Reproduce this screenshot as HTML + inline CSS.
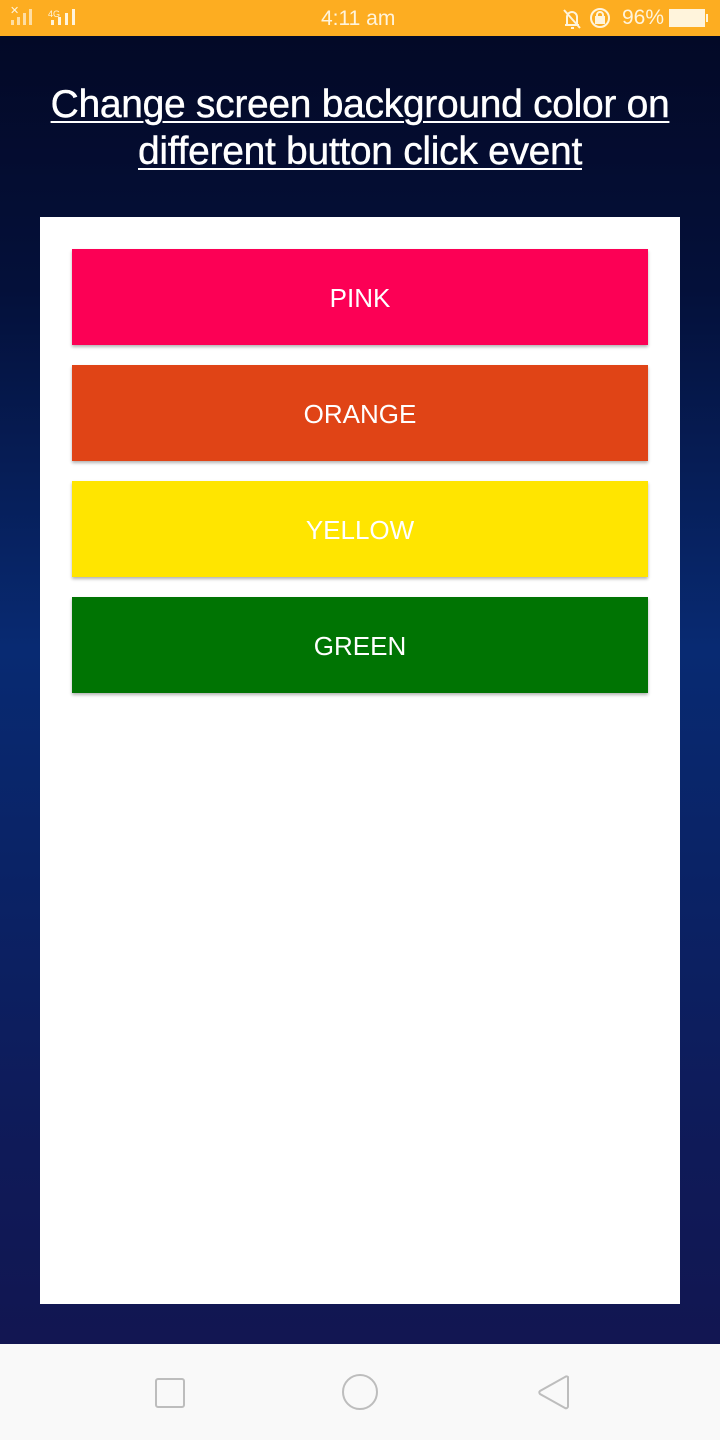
<!DOCTYPE html>
<html><head><style>
*{margin:0;padding:0;box-sizing:border-box}
html,body{width:720px;height:1440px;overflow:hidden}
body{position:relative;font-family:"Liberation Sans",sans-serif;
background:linear-gradient(180deg,#030824 0%,#04103a 20%,#082a72 45%,#0a2366 60%,#0f1a58 80%,#13144e 100%);}
.sb{position:absolute;top:0;left:0;width:720px;height:36px;background:#fdad21;color:#fff4dc;font-size:21px}
.title{position:absolute;top:81px;left:0;width:720px;text-align:center;color:#fff;font-size:39px;line-height:47px;letter-spacing:-0.3px;text-decoration:underline;text-decoration-thickness:2px;text-underline-offset:4px;-webkit-text-stroke:0.4px #fff}
.card{position:absolute;left:40px;top:217px;width:640px;height:1087px;background:#fff}
.b{position:absolute;left:72px;width:576px;height:96px;color:#fff;font-size:26px;text-align:center;line-height:98px;box-shadow:0 2px 3px rgba(0,0,0,.3)}
.nav{position:absolute;top:1344px;left:0;width:720px;height:96px;background:#f9f9f9}
</style></head><body>
<div class="sb">
<span style="position:absolute;left:10px;top:6px;font-size:11px;line-height:11px">✕</span>
<svg style="position:absolute;left:10px;top:8px" width="70" height="18"><g fill="#fff4dc" opacity=".7"><rect x="1" y="12" width="3" height="5"/><rect x="7" y="9" width="3" height="8"/><rect x="13" y="5" width="3" height="12"/><rect x="19" y="1" width="3" height="16"/></g><g fill="#fff4dc"><rect x="41" y="12" width="3" height="5"/><rect x="48" y="9" width="3" height="8"/><rect x="55" y="5" width="3" height="12"/><rect x="62" y="1" width="3" height="16"/></g><text x="38" y="9" font-size="9" fill="#fff4dc" font-family="Liberation Sans">4G</text></svg>
<span style="position:absolute;left:321px;top:7px">4:11 am</span>
<svg style="position:absolute;left:562px;top:8px" width="52" height="22" fill="none" stroke="#fff4dc" stroke-width="2"><path d="M3 17h14M5 17V9a5 5 0 0110 0v8M9 20h3M2 2l16 18"/><circle cx="38" cy="10" r="9"/><rect x="34" y="9" width="8" height="6" fill="#fff4dc"/><path d="M35 9V7a3 3 0 016 0v2"/></svg>
<span style="position:absolute;left:622px;top:6px">96%</span>
<div style="position:absolute;left:669px;top:9px;width:36px;height:18px;border:2px solid #fff4dc;background:#fff4dc"></div>
<div style="position:absolute;left:706px;top:14px;width:2px;height:8px;background:#fff4dc"></div>
</div>
<div class="title">Change screen background color on<br>different button click event</div>
<div class="card"></div>
<div class="b" style="top:249px;background:#fc0055">PINK</div>
<div class="b" style="top:365px;background:#e04416">ORANGE</div>
<div class="b" style="top:481px;background:#ffe500">YELLOW</div>
<div class="b" style="top:597px;background:#007403">GREEN</div>
<div class="nav">
<svg width="720" height="96" fill="none" stroke="#bdbdbd" stroke-width="2"><rect x="156" y="35" width="28" height="28" rx="2"/><circle cx="360" cy="48" r="17"/><path d="M568 33v29a2 2 0 01-3 2l-25-14a2 2 0 010-3l25-14a2 2 0 013 0z"/></svg>
</div>
</body></html>
